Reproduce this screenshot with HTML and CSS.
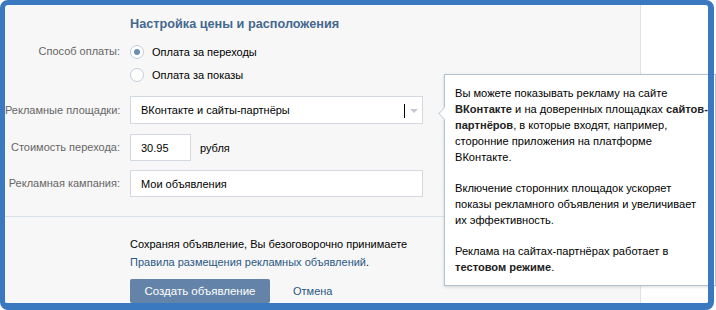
FILE: index.html
```html
<!DOCTYPE html>
<html lang="ru">
<head>
  <meta charset="UTF-8" />
  <title>Настройка цены и расположения</title>
  <link rel="stylesheet" href="styles.css">
</head>
<body>

  <div class="frame">
    <div class="page">
      <div class="panel">

        <!-- Price and placement -->
        <div class="form">
          <div class="form-title">Настройка цены и расположения</div>

          <div class="row row-top">
            <div class="label">Способ оплаты:</div>
            <div class="control">
              <label class="radio on"><span class="radio-box"></span>Оплата за переходы</label>
              <label class="radio"><span class="radio-box"></span>Оплата за показы</label>
            </div>
          </div>

          <div class="row row-select">
            <div class="label">Рекламные площадки:</div>
            <div class="control">
              <div class="select">
                <span>ВКонтакте и сайты-партнёры</span>
                <span class="caret"></span>
                <span class="arrow"></span>
              </div>
            </div>
          </div>

          <div class="row row-cost">
            <div class="label">Стоимость перехода:</div>
            <div class="control control-inline">
              <div class="input input-small">30.95</div>
              <span class="unit">рубля</span>
            </div>
          </div>

          <div class="row row-campaign">
            <div class="label">Рекламная кампания:</div>
            <div class="control">
              <div class="input">Мои объявления</div>
            </div>
          </div>
        </div>

        <!-- Submit -->
        <div class="footer">
          <div class="terms">
            Сохраняя объявление, Вы безоговорочно принимаете<br>
            <a href="#">Правила размещения рекламных объявлений</a>.
          </div>
          <div class="actions">
            <button class="btn">Создать объявление</button>
            <a href="#" class="cancel">Отмена</a>
          </div>
        </div>

      </div>
      <div class="side"></div>
    </div>

    <!-- Hint for ad platforms -->
    <div class="tip">
      <p>Вы можете показывать рекламу на сайте<br>
        <b>ВКонтакте</b> и на доверенных площадках <b>сайтов-</b><br>
        <b>партнёров</b>, в которые входят, например,<br>
        сторонние приложения на платформе<br>
        ВКонтакте.</p>
      <p>Включение сторонних площадок ускоряет<br>
        показы рекламного объявления и увеличивает<br>
        их эффективность.</p>
      <p>Реклама на сайтах-партнёрах работает в<br>
        <b>тестовом режиме</b>.</p>
    </div>
  </div>

</body>
</html>
```

FILE: styles.css
```css
* {
  box-sizing: border-box;
}

html, body {
  overflow: hidden;
}

body {
  font-family: "Liberation Sans", Arial, sans-serif;
  font-size: 11px;
  color: #000;
  background: #fff;
  margin: 0;
  padding: 0;
}

a {
  color: #2a5885;
  text-decoration: none;
}

.frame {
  position: relative;
  width: 714px;
  height: 310px;
  padding: 5px 6px 7px 5px;
}

/* blue outline on top of everything */
.frame::after {
  content: "";
  position: absolute;
  top: 0;
  left: 0;
  right: 0;
  bottom: 0;
  border: solid #3a78bf;
  border-width: 5px 6px 7px 5px;
  border-radius: 8px;
  z-index: 3;
  pointer-events: none;
}

.page {
  display: flex;
  height: 100%;
}

.panel {
  width: 636px;
  background: #f7f7f7;
  border-right: 1px solid #dfe3e8;
}

.side {
  flex: 1;
  background: #fff;
}

.form {
  padding: 10px 0 19px;
  border-bottom: 1px solid #dbe1e8;
}

.form-title {
  margin-left: 125px;
  font-size: 12.7px;
  line-height: 18px;
  font-weight: bold;
  color: #45688e;
}

.row {
  display: grid;
  grid-template-columns: 115px 293px;
  column-gap: 10px;
  align-items: center;
}

.row-top {
  align-items: start;
  margin-top: 7px;
}

.row-select {
  margin-top: 10px;
}

.row-cost {
  margin-top: 10px;
}

.row-campaign {
  margin-top: 9px;
}

.label {
  text-align: right;
  white-space: nowrap;
  color: #666;
  line-height: 23px;
}

.radio {
  display: flex;
  align-items: center;
  height: 23px;
}

.radio-box {
  width: 14px;
  height: 14px;
  margin-right: 8px;
  border: 1px solid #c3ccd6;
  border-radius: 50%;
  background: #fff;
  display: flex;
  align-items: center;
  justify-content: center;
}

.radio.on .radio-box::after {
  content: "";
  width: 6px;
  height: 6px;
  border-radius: 50%;
  background: #6d8db4;
}

.select,
.input {
  height: 27px;
  padding: 0 10px;
  border: 1px solid #d3d9de;
  background: #fff;
  display: flex;
  align-items: center;
}

.select {
  height: 28px;
  position: relative;
}

.caret {
  position: absolute;
  left: 273px;
  top: 7px;
  width: 1px;
  height: 14px;
  background: #000;
}

.arrow {
  position: absolute;
  left: 279px;
  top: 12px;
  border-left: 4px solid transparent;
  border-right: 4px solid transparent;
  border-top: 4px solid #c5cad0;
}

.control-inline {
  display: flex;
  align-items: center;
}

.input-small {
  width: 61px;
}

.unit {
  margin-left: 9px;
}

.footer {
  padding: 18px 0 0 125px;
}

.terms {
  line-height: 18px;
}

.actions {
  display: flex;
  align-items: center;
  margin-top: 8px;
}

.btn {
  width: 140px;
  height: 24px;
  padding: 0;
  border: 0;
  border-radius: 2px;
  background: #6383a8;
  color: #fff;
  font-family: inherit;
  font-size: 11.5px;
}

.cancel {
  margin-left: 23px;
}

.tip {
  position: absolute;
  left: 444px;
  top: 74px;
  width: 272px;
  height: 212px;
  padding: 10px 8px 0 10px;
  background: #fff;
  border: 1px solid #b5c1ce;
  box-shadow: 0 1px 3px rgba(0, 0, 0, 0.15);
  font-size: 11.1px;
  line-height: 16px;
  z-index: 2;
}

.tip::before {
  content: "";
  position: absolute;
  left: -5px;
  top: 34px;
  width: 8px;
  height: 8px;
  background: #fff;
  border-left: 1px solid #c9d2dc;
  border-bottom: 1px solid #c9d2dc;
  transform: rotate(45deg);
}

.tip p {
  margin: 0 0 15px;
  white-space: nowrap;
}

.tip b {
  color: #222;
}
```
